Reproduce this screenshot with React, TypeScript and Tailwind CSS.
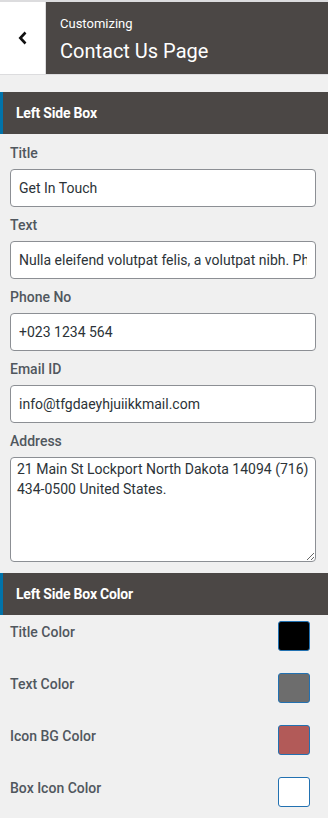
import { useState } from "react";

const fields = [
  { label: "Title", value: "Get In Touch" },
  { label: "Text", value: "Nulla eleifend volutpat felis, a volutpat nibh. Phasellus" },
  { label: "Phone No", value: "+023 1234 564" },
  { label: "Email ID", value: "info@tfgdaeyhjuiikkmail.com" },
];

const colors = [
  { label: "Title Color", color: "bg-[#000000]" },
  { label: "Text Color", color: "bg-[#6d6d6d]" },
  { label: "Icon BG Color", color: "bg-[#b25a58]" },
  { label: "Box Icon Color", color: "bg-[#ffffff]" },
];

const SectionHeader = ({ title }: { title: string }) => (
  <div className="h-[42px] bg-[#4b4745] border-l-[3px] border-[#0073aa] flex items-center pl-[13px]">
    <h3 className="text-[14px] font-bold text-white tracking-[-0.2px]">{title}</h3>
  </div>
);

const App = () => {
  const [address, setAddress] = useState("21 Main St Lockport North Dakota 14094 (716) 434-0500 United States.");

  return (
    <main className="w-[328px] h-[818px] bg-[#f0f0f0] overflow-hidden font-['Roboto',sans-serif] text-[#50575e]">
      <div className="flex h-[75px] border-t-2 border-b border-[#dcdcde]">
        <button className="w-[46px] bg-white border-r border-[#dcdcde] flex items-center justify-center">
          <svg width="12" height="14" viewBox="0 0 12 14" fill="none">
            <path d="M8.5 1.5 L3.3 7 L8.5 12.5" stroke="#111" strokeWidth="2.6" />
          </svg>
        </button>
        <div className="flex-1 bg-[#4b4745] pl-[14px] pt-[13px] text-white">
          <p className="text-[13px] leading-[18px]">Customizing</p>
          <h2 className="text-[20px] leading-[28px] mt-[4px]">Contact Us Page</h2>
        </div>
      </div>

      <div className="mt-[17px]">
        <SectionHeader title="Left Side Box" />
      </div>

      <div className="px-[10px] pt-[9px]">
        {fields.map((f) => (
          <div key={f.label} className="mb-[8px]">
            <label className="block text-[14px] font-medium leading-[20px] mb-[6px]">{f.label}</label>
            <input
              type="text"
              defaultValue={f.value}
              className="w-[306px] h-[38px] bg-white border border-[#8c8f94] rounded-[4px] px-[8px] text-[14px] text-[#2c3338] outline-none"
            />
          </div>
        ))}
        <label className="block text-[14px] font-medium leading-[20px] mb-[6px]">Address</label>
        <textarea
          value={address}
          onChange={(e) => setAddress(e.target.value)}
          className="block w-[306px] h-[105px] bg-white border border-[#8c8f94] rounded-[4px] px-[6px] py-[1px] text-[14px] leading-[20px] text-[#2c3338] outline-none"
        />
      </div>

      <div className="mt-[11px]">
        <SectionHeader title="Left Side Box Color" />
      </div>

      <div className="pl-[10px] pr-[18px] pt-[6px]">
        {colors.map((c) => (
          <div key={c.label} className="flex items-start justify-between h-[52px]">
            <span className="text-[14px] font-medium leading-[20px] mt-[1px]">{c.label}</span>
            <span className={`w-[32px] h-[30px] rounded-[3px] border border-[#2271b1] ${c.color}`} />
          </div>
        ))}
      </div>
    </main>
  );
};

export default App;
